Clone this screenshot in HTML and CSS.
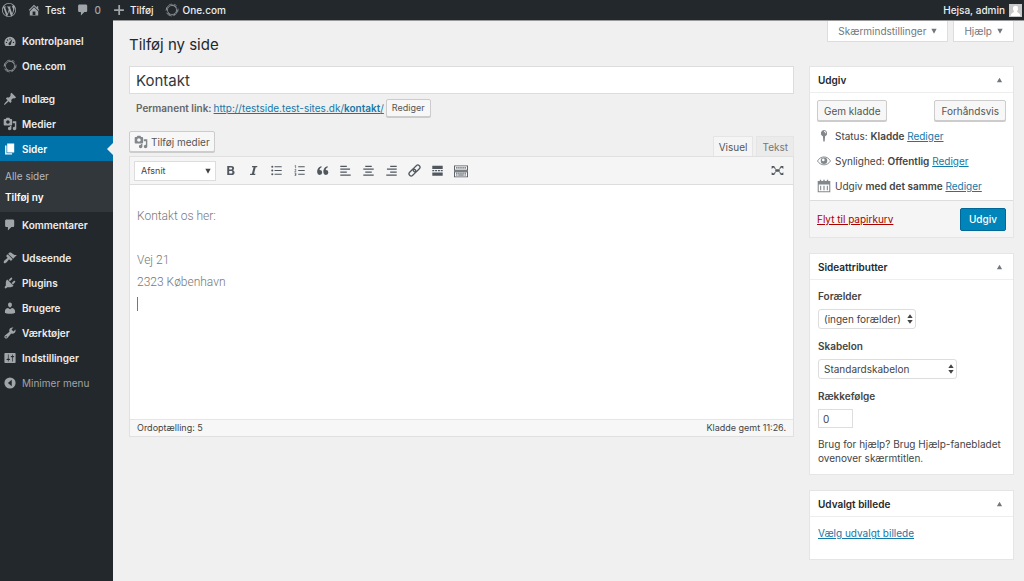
FILE: index.html
```html
<!DOCTYPE html>
<html lang="da">
<head>
<meta charset="utf-8">
<meta name="viewport" content="width=device-width, initial-scale=1">
<title>Tilføj ny side</title>
<link rel="stylesheet" href="styles.css">
</head>
<body>
<svg class="sprite" aria-hidden="true">
  <symbol id="i-wp" viewBox="0 0 20 20"><path d="M20 10c0-5.51-4.49-10-10-10C4.48 0 0 4.49 0 10c0 5.52 4.48 10 10 10 5.51 0 10-4.48 10-10zM7.78 15.37L4.37 6.22c.55-.02 1.17-.08 1.17-.08.5-.06.44-1.13-.06-1.11 0 0-1.45.11-2.37.11-.18 0-.37 0-.58-.01C4.12 2.69 6.87 1.11 10 1.11c2.33 0 4.45.87 6.05 2.34-.68-.11-1.65.39-1.65 1.58 0 .74.45 1.36.9 2.1.35.61.55 1.36.55 2.46 0 1.49-1.4 5-1.4 5l-3.03-8.37c.54-.02.82-.17.82-.17.5-.05.44-1.25-.06-1.22 0 0-1.44.12-2.38.12-.87 0-2.33-.12-2.33-.12-.5-.03-.56 1.2-.06 1.22l.92.08 1.26 3.41zM17.41 10c.24-.64.74-1.87.43-4.25.7 1.29 1.05 2.71 1.05 4.25 0 3.29-1.73 6.24-4.4 7.78.97-2.59 1.94-5.2 2.92-7.78zM6.1 18.09C3.12 16.65 1.11 13.53 1.11 10c0-1.3.23-2.48.72-3.59C3.25 10.3 4.67 14.2 6.1 18.09zm4.03-6.63l2.58 6.98c-.86.29-1.76.45-2.71.45-.79 0-1.57-.11-2.29-.33.81-2.38 1.62-4.74 2.42-7.1z"/></symbol>
  <symbol id="i-home" viewBox="0 0 20 20"><path d="M16 8.5l1.53 1.53-1.06 1.06L10 4.6l-6.47 6.49-1.06-1.06L10 2.5l4 4v-2h2v4zm-6-2.46l6 5.99V18H4v-5.97zM12 17v-5H8v5h4z"/></symbol>
  <symbol id="i-comment" viewBox="0 0 20 20"><path d="M5 2h9c1.1 0 2 .9 2 2v7c0 1.1-.9 2-2 2h-2l-5 5v-5H5c-1.1 0-2-.9-2-2V4c0-1.1.9-2 2-2z"/></symbol>
  <symbol id="i-plus" viewBox="0 0 20 20"><path d="M9 3h2.500v6H17v2.500h-5.500V17H9v-5.500H3V9h6z"/></symbol>
  <symbol id="i-one" viewBox="0 0 20 20"><g fill="none" stroke="currentColor"><circle cx="10" cy="10" r="6.500" stroke-width="1"/><circle cx="9.500" cy="10.500" r="8" stroke-width="1" stroke-dasharray="9 3"/><ellipse cx="10.500" cy="9.500" rx="8.200" ry="8" stroke-width="1" stroke-dasharray="4 4"/></g></symbol>
  <symbol id="i-dash" viewBox="0 0 20 20"><path fill-rule="evenodd" d="M3.760 17h12.480c1.100-1.370 1.760-3.110 1.760-5a8 8 0 0 0-16 0c0 1.890.66 3.630 1.760 5zM9 7a1 1 0 1 0 2 0 1 1 0 0 0-2 0zM5.500 8.500a1 1 0 1 0 2 0 1 1 0 0 0-2 0zM4 12a1 1 0 1 0 2 0 1 1 0 0 0-2 0zM14 12a1 1 0 1 0 2 0 1 1 0 0 0-2 0zM13.300 7l-4.300 5.300a1.900 1.900 0 1 0 2.600 1.400z"/></symbol>
  <symbol id="i-pin" viewBox="0 0 20 20"><path d="M10.440 3.020l1.820-1.820 6.360 6.350-1.830 1.820c-1.050-.68-2.480-.57-3.410.36l-.75.75c-.92.93-1.040 2.350-.35 3.410l-1.830 1.820-2.410-2.410-2.800 2.790c-.42.42-3.380 2.710-3.800 2.290s1.860-3.390 2.280-3.810l2.790-2.790L4.100 9.360l1.830-1.820c1.050.69 2.480.57 3.400-.36l.75-.75c.93-.92 1.050-2.350.36-3.410z"/></symbol>
  <symbol id="i-media" viewBox="0 0 20 20"><path d="M13 11V4c0-.55-.45-1-1-1h-1.670L9 1H5L3.670 3H2c-.55 0-1 .45-1 1v7c0 .55.45 1 1 1h10c.55 0 1-.45 1-1zM7 4.500c1.380 0 2.500 1.120 2.500 2.500S8.380 9.500 7 9.500 4.500 8.380 4.500 7 5.620 4.500 7 4.500zM14 6h5v10.500c0 1.380-1.120 2.500-2.500 2.500S14 17.880 14 16.500s1.120-2.500 2.500-2.500c.17 0 .34.020.5.050V9h-3V6zm-4 8.050V13h2v3.500c0 1.380-1.120 2.500-2.500 2.500S7 17.880 7 16.500 8.120 14 9.500 14c.17 0 .34.020.5.050z"/></symbol>
  <symbol id="i-page" viewBox="0 0 20 20"><path d="M6 15V2h10v13H6zm-1 1h8v2H3V5h2v11z"/></symbol>
  <symbol id="i-brush" viewBox="0 0 20 20"><path d="M14.480 11.060L7.410 3.990l1.500-1.500c.5-.56 2.300-.47 3.510.32 1.210.8 1.430 1.280 2.910 2.100 1.180.64 2.450 1.260 4.450.85zm-.71.71L6.700 4.700 4.930 6.470c-.39.39-.39 1.020 0 1.410l1.060 1.060c.39.39.39 1.030 0 1.420-.6.6-1.430 1.110-2.210 1.690-.35.26-.7.53-1.010.84C1.430 14.230.4 16.080 1.400 17.070c.99 1 2.840-.03 4.180-1.360.31-.31.58-.66.85-1.020.57-.78 1.080-1.610 1.690-2.210.39-.39 1.020-.39 1.410 0l1.060 1.060c.39.39 1.020.39 1.410 0z"/></symbol>
  <symbol id="i-plug" viewBox="0 0 20 20"><path d="M13.110 4.360L9.870 7.600 8 5.730l3.240-3.240c.35-.34 1.050-.2 1.560.32.52.51.66 1.210.31 1.550zm-8 1.770l.91-1.120 9.010 9.010-1.190.84c-.71.71-2.630 1.160-3.820 1.160H6.140L4.900 17.260c-.59.59-1.540.59-2.120 0-.59-.58-.59-1.530 0-2.120l1.240-1.240v-3.880c0-1.130.4-3.190 1.090-3.890zm7.260 3.970l3.240-3.240c.34-.35 1.040-.21 1.550.31.52.51.66 1.210.31 1.550l-3.240 3.250z"/></symbol>
  <symbol id="i-user" viewBox="0 0 20 20"><path d="M10 9.250c-2.270 0-2.730-3.440-2.730-3.440C7 4.020 7.820 2 9.970 2c2.160 0 2.980 2.020 2.710 3.810 0 0-.41 3.440-2.680 3.440zm0 2.570L12.720 10c2.390 0 4.520 2.330 4.520 4.530v2.490s-3.650 1.130-7.240 1.130c-3.650 0-7.240-1.130-7.240-1.130v-2.490c0-2.250 1.940-4.480 4.470-4.480z"/></symbol>
  <symbol id="i-tool" viewBox="0 0 20 20"><path d="M16.680 9.770c-1.340 1.340-3.300 1.670-4.950.99l-5.410 6.520c-.99.99-2.590.99-3.580 0s-.99-2.590 0-3.570l6.520-5.420c-.68-1.650-.35-3.610.99-4.950 1.280-1.280 3.120-1.620 4.720-1.060l-2.890 2.890 2.820 2.820 2.860-2.870c.53 1.580.18 3.390-1.080 4.650zM3.810 16.210c.4.39 1.040.39 1.430 0 .4-.4.4-1.040 0-1.430-.39-.4-1.030-.4-1.430 0-.39.39-.39 1.030 0 1.430z"/></symbol>
  <symbol id="i-settings" viewBox="0 0 20 20"><path d="M18 16V4c0-.55-.45-1-1-1H3c-.55 0-1 .45-1 1v12c0 .55.45 1 1 1h14c.55 0 1-.45 1-1zM8 11h1c.55 0 1 .45 1 1s-.45 1-1 1H8v1.500c0 .28-.22.5-.5.5s-.5-.22-.5-.5V13H6c-.55 0-1-.45-1-1s.45-1 1-1h1V5.500c0-.28.22-.5.5-.5s.5.22.5.5V11zm5-2h-1c-.55 0-1-.45-1-1s.45-1 1-1h1V5.500c0-.28.22-.5.5-.5s.5.22.5.5V7h1c.55 0 1 .45 1 1s-.45 1-1 1h-1v5.500c0 .28-.22.5-.5.5s-.5-.22-.5-.5V9z"/></symbol>
  <symbol id="i-collapse" viewBox="0 0 20 20"><path fill-rule="evenodd" d="M10 2a8 8 0 1 0 0 16 8 8 0 0 0 0-16zM12.500 5.500v9L7 10z"/></symbol>
  <symbol id="i-bold" viewBox="0 0 20 20"><path fill-rule="evenodd" d="M5 3h6c3 0 4.500 1.200 4.500 3.500 0 1.500-.8 2.600-2 3 1.700.4 2.700 1.600 2.700 3.400 0 2.600-1.900 4.100-5 4.100H5zM8 5.300v3.300h2.500c1.300 0 2-.5 2-1.700 0-1.100-.7-1.600-2-1.600zM8 10.800v3.900h2.800c1.400 0 2.200-.6 2.200-2s-.8-1.900-2.200-1.900z"/></symbol>
  <symbol id="i-italic" viewBox="0 0 20 20"><path d="M8 3h8l-.5 2h-2.100l-2.600 10h2.200l-.5 2H4.500l.5-2h2.500l2.600-10H7.500z"/></symbol>
  <symbol id="i-ul" viewBox="0 0 20 20"><path d="M7 3.500h11V5H7zM7 9.300h11v1.500H7zM7 15h11v1.500H7z"/><circle cx="3.500" cy="4.300" r="1.600"/><circle cx="3.500" cy="10" r="1.600"/><circle cx="3.500" cy="15.800" r="1.600"/></symbol>
  <symbol id="i-ol" viewBox="0 0 20 20"><path d="M8 3.500h10V5H8zM8 9.300h10v1.500H8zM8 15h10v1.500H8z"/><path fill="none" stroke="currentColor" d="M2.500 3l1.500-.8V6.500M2.500 8.500h2v1.500l-2 1.800h2.500M2.500 14h2v1.700h-1.500 1.500v2H2.500"/></symbol>
  <symbol id="i-quote" viewBox="0 0 20 20"><path d="M9.500 13a3.800 3.800 0 1 1-7.600 0C1.400 8 4.200 4.300 8.300 3.500l.5 1.500C6.500 6 5.500 7.600 5.400 9.300A3.800 3.800 0 0 1 9.500 13zM19 13a3.800 3.800 0 1 1-7.600 0c-.5-5 2.300-8.700 6.400-9.500l.5 1.500c-2.300 1-3.300 2.600-3.400 4.300A3.800 3.800 0 0 1 19 13z"/></symbol>
  <symbol id="i-left" viewBox="0 0 20 20"><path d="M2 2.500h10v2H2zM2 7h15v2H2zM2 11.500h10v2H2zM2 16h16v2H2z"/></symbol>
  <symbol id="i-center" viewBox="0 0 20 20"><path d="M5 2.500h10v2H5zM2 7h16v2H2zM5 11.500h10v2H5zM2 16h16v2H2z"/></symbol>
  <symbol id="i-right" viewBox="0 0 20 20"><path d="M8 2.500h10v2H8zM3 7h15v2H3zM8 11.500h10v2H8zM2 16h16v2H2z"/></symbol>
  <symbol id="i-link" viewBox="0 0 20 20"><g fill="none" stroke="currentColor" stroke-width="2" transform="rotate(-45 10 10)"><rect x="-.5" y="6.700" width="12" height="6.600" rx="3.300"/><rect x="8.500" y="6.700" width="12" height="6.600" rx="3.300"/></g></symbol>
  <symbol id="i-more" viewBox="0 0 20 20"><path d="M2 2.500h16v5H2zM2 9.200h3v2H2zM6.300 9.200h3v2h-3zM10.700 9.200h3v2h-3zM15 9.200h3v2h-3zM2 13h16v5H2z"/></symbol>
  <symbol id="i-kitchen" viewBox="0 0 20 20"><path fill-rule="evenodd" d="M0 2h20v7.500H0zM1.300 3.300v4.900h17.400V3.300zM0 10.500h20V19H0zM1.300 11.800v5.900h17.400v-5.900zM3 4.600h2v2H3zM6 4.600h2v2H6zM9 4.600h2v2H9zM12 4.600h2v2h-2zM15 4.600h2v2h-2zM3 12.500h2v1.500H3zM6 12.500h2v1.500H6zM9 12.500h2v1.500H9zM12 12.500h2v1.500h-2zM15 12.500h2v1.500h-2zM3 15h2v1.500H3zM6 15h8v1.500H6zM15 15h2v1.500h-2z"/></symbol>
  <symbol id="i-full" viewBox="0 0 20 20"><path d="M6.500 8h7v4h-7zM1 3h5L4.800 4.200 7.500 6.500l-1.200 1.200-2.800-2.300L1 7.500zM19 3h-5l1.200 1.200-2.700 2.300 1.200 1.200 2.800-2.300L19 7.500zM1 17h5l-1.200-1.200 2.700-2.300-1.200-1.200-2.800 2.300L1 12.500zM19 17h-5l1.200-1.200-2.700-2.300 1.200-1.200 2.800 2.300 2.500-2.100z"/></symbol>
  <symbol id="i-status" viewBox="0 0 20 20"><path fill-rule="evenodd" d="M10 1.500a4.500 4.500 0 0 1 1.600 8.700L11 17l-1 1.500L9 17l-.6-6.800A4.500 4.500 0 0 1 10 1.500zM10 3v1.300a1.700 1.700 0 0 1 1.700 1.700H13a3 3 0 0 0-3-3z"/></symbol>
  <symbol id="i-eye" viewBox="0 0 20 20"><path fill="none" stroke="currentColor" stroke-width="1.300" d="M.7 10C3 6 6.300 4.200 10 4.200S17 6 19.300 10C17 13.500 13.700 15.500 10 15.500S3 13.500.7 10z"/><path fill-rule="evenodd" d="M10 5a4.700 4.700 0 1 0 0 9.400A4.700 4.700 0 0 0 10 5zM9 6.500a1.900 1.900 0 1 1 0 3.800 1.900 1.900 0 0 1 0-3.800z"/></symbol>
  <symbol id="i-cal" viewBox="0 0 20 20"><path fill-rule="evenodd" d="M1 3h3V1h2v2h3V1h2v2h3V1h2v2h3v16H1zM2.500 8v9.500h15V8zM4.500 9.500H6V16H4.500zM9.200 9.500h1.600V16H9.200zM14 9.500h1.500V16H14z"/></symbol>
  <symbol id="i-down" viewBox="0 0 8 8"><path d="M.5 1h7L4 7.500z"/></symbol>
  <symbol id="i-up" viewBox="0 0 8 8"><path d="M1 7h6L4 2z"/></symbol>
  <symbol id="i-updown" viewBox="0 0 6 10"><path d="M.3 4L3 .2 5.700 4zM.3 6L3 9.800 5.700 6z"/></symbol>
</svg>

<header class="bar">
  <a class="bar-item" href="#" aria-label="WordPress"><svg class="icon"><use href="#i-wp"/></svg></a>
  <a class="bar-item" href="#"><svg class="icon"><use href="#i-home"/></svg>Test</a>
  <a class="bar-item" href="#"><svg class="icon"><use href="#i-comment"/></svg><span class="count">0</span></a>
  <a class="bar-item" href="#"><svg class="icon"><use href="#i-plus"/></svg>Tilføj</a>
  <a class="bar-item" href="#"><svg class="icon"><use href="#i-one"/></svg>One.com</a>
  <a class="bar-item bar-user" href="#">Hejsa, admin<svg class="avatar" viewBox="0 0 12 12"><rect width="12" height="12" fill="#c9c9c9"/><path fill="#fff" d="M6 1.500c1.700 0 2.500 1.200 2.300 2.800C8.200 5.600 7.600 6.500 7.300 7c.1.900 3 1.200 3.200 4H1.500c.2-2.800 3.100-3.100 3.200-4-.3-.5-.9-1.400-1-2.700C3.500 2.700 4.300 1.500 6 1.500z"/></svg></a>
</header>

<div class="page">
  <nav class="menu" aria-label="Hovedmenu">
    <a class="menu-item" href="#"><svg class="icon"><use href="#i-dash"/></svg>Kontrolpanel</a>
    <a class="menu-item group-end" href="#"><svg class="icon"><use href="#i-one"/></svg>One.com</a>
    <a class="menu-item" href="#"><svg class="icon"><use href="#i-pin"/></svg>Indlæg</a>
    <a class="menu-item" href="#"><svg class="icon"><use href="#i-media"/></svg>Medier</a>
    <a class="menu-item current" href="#"><svg class="icon"><use href="#i-page"/></svg>Sider</a>
    <div class="submenu">
      <a class="sub-item" href="#">Alle sider</a>
      <a class="sub-item active" href="#" aria-current="page">Tilføj ny</a>
    </div>
    <a class="menu-item group-end" href="#"><svg class="icon"><use href="#i-comment"/></svg>Kommentarer</a>
    <a class="menu-item" href="#"><svg class="icon"><use href="#i-brush"/></svg>Udseende</a>
    <a class="menu-item" href="#"><svg class="icon"><use href="#i-plug"/></svg>Plugins</a>
    <a class="menu-item" href="#"><svg class="icon"><use href="#i-user"/></svg>Brugere</a>
    <a class="menu-item" href="#"><svg class="icon"><use href="#i-tool"/></svg>Værktøjer</a>
    <a class="menu-item" href="#"><svg class="icon"><use href="#i-settings"/></svg>Indstillinger</a>
    <button class="menu-item collapse" type="button"><svg class="icon"><use href="#i-collapse"/></svg>Minimer menu</button>
  </nav>

  <main class="content">
    <div class="head">
      <h1 class="title">Tilføj ny side</h1>
      <div class="meta-tabs">
        <button class="meta-tab" type="button">Skærmindstillinger<svg class="caret"><use href="#i-down"/></svg></button>
        <button class="meta-tab" type="button">Hjælp<svg class="caret"><use href="#i-down"/></svg></button>
      </div>
    </div>

    <div class="columns">
      <section class="primary">
        <input class="title-input" type="text" value="Kontakt" aria-label="Titel">
        <div class="permalink">
          <span class="permalink-label">Permanent link:</span>
          <a class="link" href="#">http://testside.test-sites.dk/<b>kontakt</b>/</a>
          <button class="button small" type="button">Rediger</button>
        </div>
        <div class="editor-tools">
          <button class="button media" type="button"><svg class="icon"><use href="#i-media"/></svg>Tilføj medier</button>
          <div class="modes">
            <button class="mode on" type="button">Visuel</button>
            <button class="mode" type="button">Tekst</button>
          </div>
        </div>
        <div class="editor">
          <div class="toolbar">
            <span class="select format"><select aria-label="Format"><option>Afsnit</option></select><svg class="caret"><use href="#i-down"/></svg></span>
            <button class="tool" type="button" aria-label="Fed"><svg><use href="#i-bold"/></svg></button>
            <button class="tool" type="button" aria-label="Kursiv"><svg><use href="#i-italic"/></svg></button>
            <button class="tool" type="button" aria-label="Punktliste"><svg><use href="#i-ul"/></svg></button>
            <button class="tool" type="button" aria-label="Nummereret liste"><svg><use href="#i-ol"/></svg></button>
            <button class="tool" type="button" aria-label="Citat"><svg><use href="#i-quote"/></svg></button>
            <button class="tool" type="button" aria-label="Venstrejuster"><svg><use href="#i-left"/></svg></button>
            <button class="tool" type="button" aria-label="Centrer"><svg><use href="#i-center"/></svg></button>
            <button class="tool" type="button" aria-label="Højrejuster"><svg><use href="#i-right"/></svg></button>
            <button class="tool" type="button" aria-label="Indsæt link"><svg><use href="#i-link"/></svg></button>
            <button class="tool" type="button" aria-label="Indsæt Læs mere"><svg><use href="#i-more"/></svg></button>
            <button class="tool wide" type="button" aria-label="Vis værktøjslinje"><svg><use href="#i-kitchen"/></svg></button>
            <button class="tool full" type="button" aria-label="Fuld skærm"><svg><use href="#i-full"/></svg></button>
          </div>
          <div class="text" contenteditable="true" role="textbox" aria-multiline="true" aria-label="Indhold">
            <p>Kontakt os her:</p>
            <p>Vej 21<br>2323 København<br><span class="cursor"></span></p>
          </div>
          <div class="statusbar"><span>Ordoptælling: 5</span><span>Kladde gemt 11:26.</span></div>
        </div>
      </section>

      <aside class="side">
        <section class="box">
          <h2 class="box-head">Udgiv<svg class="caret"><use href="#i-up"/></svg></h2>
          <div class="publish">
            <div class="publish-actions">
              <button class="button" type="button">Gem kladde</button>
              <button class="button" type="button">Forhåndsvis</button>
            </div>
            <p class="publish-row"><svg class="icon"><use href="#i-status"/></svg><span>Status: <b>Kladde</b> <a class="link" href="#">Rediger</a></span></p>
            <p class="publish-row"><svg class="icon"><use href="#i-eye"/></svg><span>Synlighed: <b>Offentlig</b> <a class="link" href="#">Rediger</a></span></p>
            <p class="publish-row"><svg class="icon"><use href="#i-cal"/></svg><span>Udgiv <b>med det samme</b> <a class="link" href="#">Rediger</a></span></p>
          </div>
          <div class="publish-foot">
            <a class="link trash" href="#">Flyt til papirkurv</a>
            <button class="button primary-button" type="button">Udgiv</button>
          </div>
        </section>

        <section class="box">
          <h2 class="box-head">Sideattributter<svg class="caret"><use href="#i-up"/></svg></h2>
          <div class="attributes">
            <label class="label" for="parent">Forælder</label>
            <span class="select parent"><select id="parent"><option>(ingen forælder)</option></select><svg class="updown"><use href="#i-updown"/></svg></span>
            <label class="label" for="template">Skabelon</label>
            <span class="select template"><select id="template"><option>Standardskabelon</option></select><svg class="updown"><use href="#i-updown"/></svg></span>
            <label class="label" for="order">Rækkefølge</label>
            <input class="order" id="order" type="text" value="0">
            <p class="help">Brug for hjælp? Brug Hjælp-fanebladet ovenover skærmtitlen.</p>
          </div>
        </section>

        <section class="box">
          <h2 class="box-head">Udvalgt billede<svg class="caret"><use href="#i-up"/></svg></h2>
          <div class="thumbnail"><a class="link" href="#">Vælg udvalgt billede</a></div>
        </section>
      </aside>
    </div>
  </main>
</div>
</body>
</html>
```
FILE: styles.css
```css
* { box-sizing: border-box; }
body {
  margin: 0;
  min-height: 100vh;
  display: flex;
  flex-direction: column;
  background: #f0f0f0;
  color: #444;
  font: 10px/14px Inter, "Liberation Sans", sans-serif;
}
button, input, select { font: inherit; color: inherit; margin: 0; }
button { cursor: pointer; }
p, h1, h2 { margin: 0; }
svg { fill: currentColor; flex: none; }
b { font-weight: 600; }
.sprite { position: absolute; width: 0; height: 0; }
.icon { width: 14px; height: 14px; }
.caret { width: 6px; height: 6px; }
.link { color: #1478a8; text-decoration: underline; }

.bar {
  display: flex;
  align-items: center;
  height: 20px;
  padding: 0 2px;
  background: #23282d;
  color: #eee;
  font-weight: 500;
}
.bar-item {
  display: flex;
  align-items: center;
  gap: 4px;
  height: 18px;
  margin-right: 11px;
  color: inherit;
  text-decoration: none;
}
.bar-item .icon { color: #a0a5aa; }
.bar-user { margin: 0 0 0 auto; }
.avatar { width: 13px; height: 13px; }
.count { color: #a0a5aa; }

.page { display: flex; flex: 1; }
.menu {
  display: flex;
  flex-direction: column;
  width: 113px;
  flex: none;
  padding-top: 8px;
  background: #23282d;
}
.menu-item {
  position: relative;
  display: flex;
  align-items: center;
  gap: 5px;
  height: 25px;
  padding: 0 3px;
  border: 0;
  background: none;
  color: #eee;
  font-weight: 600;
  text-decoration: none;
}
.menu-item .icon { color: #a0a5aa; }
.group-end { margin-bottom: 8px; }
.current { background: #0073aa; color: #fff; }
.current .icon { color: #fff; }
.current::after {
  content: "";
  position: absolute;
  right: 0;
  top: 7px;
  border: 6px solid transparent;
  border-left: 0;
  border-right-color: #f0f0f0;
}
.submenu { padding: 5px 5px 4px; background: #32373c; }
.sub-item {
  display: block;
  height: 21px;
  line-height: 21px;
  color: #b4b9be;
  text-decoration: none;
}
.sub-item.active { color: #fff; font-weight: 600; }
.menu-item.collapse { color: #a0a5aa; font-weight: 400; }

.content { flex: 1; min-width: 0; padding: 0 10px 20px 16px; border-top: 1px solid #999; }
.head { display: flex; justify-content: space-between; height: 45px; }
.title { padding-top: 14px; color: #23282d; font-size: 15px; line-height: 20px; font-weight: 400; }
.meta-tabs { display: flex; gap: 5px; align-items: flex-start; }
.meta-tab {
  display: flex;
  align-items: center;
  gap: 5px;
  height: 21px;
  padding: 0 10px;
  border: 1px solid #ddd;
  border-top: 0;
  background: #fff;
  color: #72777c;
}
.columns { display: flex; gap: 15px; align-items: flex-start; }
.primary { flex: 1; min-width: 0; }
.title-input {
  display: block;
  width: 100%;
  height: 28px;
  padding: 0 6px;
  border: 1px solid #ddd;
  background: #fff;
  color: #32373c;
  font-size: 15px;
}
.permalink { display: flex; align-items: center; gap: 2px; padding: 5px 0 0 7px; color: #666; }
.permalink-label { font-weight: 600; }
.button {
  height: 21px;
  padding: 0 6px;
  border: 1px solid #ccc;
  border-radius: 2px;
  background: #f7f7f7;
  color: #555;
  box-shadow: 0 1px 0 #ccc;
}
.small { height: 18px; padding: 0 5px; font-size: 9px; }
.editor-tools { display: flex; justify-content: space-between; align-items: flex-start; padding-top: 14px; }
.media { display: flex; align-items: center; gap: 3px; padding: 0 4px; }
.media .icon { color: #82878c; }
.modes { display: flex; gap: 3px; padding-top: 5px; }
.mode {
  height: 20px;
  padding: 0 5px;
  border: 1px solid #e5e5e5;
  border-bottom: 0;
  background: #ebebeb;
  color: #777;
}
.mode.on { background: #f5f5f5; color: #555; }
.editor { border: 1px solid #e0e0e0; background: #fff; }
.toolbar {
  display: flex;
  align-items: center;
  height: 28px;
  padding: 0 4px;
  border-bottom: 1px solid #ddd;
  background: #f5f5f5;
}
.select { position: relative; display: block; width: max-content; }
.select select {
  appearance: none;
  display: block;
  width: 100%;
  height: 20px;
  padding: 0 5px;
  border: 1px solid #ddd;
  border-radius: 3px;
  background: #fff;
}
.select svg { position: absolute; pointer-events: none; }
.format { width: 82px; margin-right: 3px; }
.format select { border-radius: 0; font-size: 9px; padding: 0 6px; }
.format .caret { right: 5px; top: 7px; }
.tool {
  display: grid;
  place-items: center;
  width: 23px;
  height: 20px;
  padding: 0;
  border: 0;
  background: none;
  color: #50575e;
}
.tool svg { width: 13px; height: 13px; }
.tool.wide svg { width: 14px; height: 14px; }
.full { margin-left: auto; }
.text {
  min-height: 234px;
  padding: 20px 7px;
  color: #777;
  font: 300 12px/22px Roboto, sans-serif;
  outline: 0;
}
.text p { margin-bottom: 22px; }
.text p:last-child { margin: 0; }
.cursor { display: inline-block; height: 14px; border-left: 1px solid #777; vertical-align: text-bottom; }
.statusbar {
  display: flex;
  justify-content: space-between;
  height: 17px;
  padding: 0 7px;
  border-top: 1px solid #e5e5e5;
  background: #f7f7f7;
  font-size: 9px;
  line-height: 16px;
}

.side { display: flex; flex-direction: column; gap: 15px; width: 205px; flex: none; }
.box { border: 1px solid #e5e5e5; background: #fff; }
.box-head {
  display: flex;
  align-items: center;
  justify-content: space-between;
  height: 26px;
  padding: 0 10px 0 8px;
  border-bottom: 1px solid #eee;
  color: #23282d;
  font-size: 10px;
  font-weight: 600;
}
.box-head .caret { color: #72777c; width: 7px; height: 7px; }
.publish { padding: 7px 7px 2px; }
.publish-actions { display: flex; justify-content: space-between; padding-bottom: 2px; }
.publish-row { display: flex; align-items: center; gap: 4px; height: 25px; }
.publish-row .icon { color: #82878c; }
.publish-foot {
  display: flex;
  align-items: center;
  justify-content: space-between;
  height: 37px;
  padding: 0 7px;
  border-top: 1px solid #ddd;
  background: #f5f5f5;
}
.trash { color: #a00; }
.primary-button {
  height: 23px;
  padding: 0 8px;
  border-color: #006799;
  background: #0085ba;
  color: #fff;
  font-weight: 500;
  box-shadow: none;
}
.attributes { padding: 9px 8px; }
.label { display: block; margin-bottom: 6px; font-weight: 600; }
.attributes .select { margin-bottom: 10px; }
.updown { width: 6px; height: 10px; right: 3px; top: 5px; }
.parent { width: 98px; }
.template { width: 139px; }
.order { display: block; width: 35px; height: 19px; padding: 0 4px; border: 1px solid #ddd; }
.help { padding-top: 9px; }
.thumbnail { padding: 9px 8px 19px; }
```
